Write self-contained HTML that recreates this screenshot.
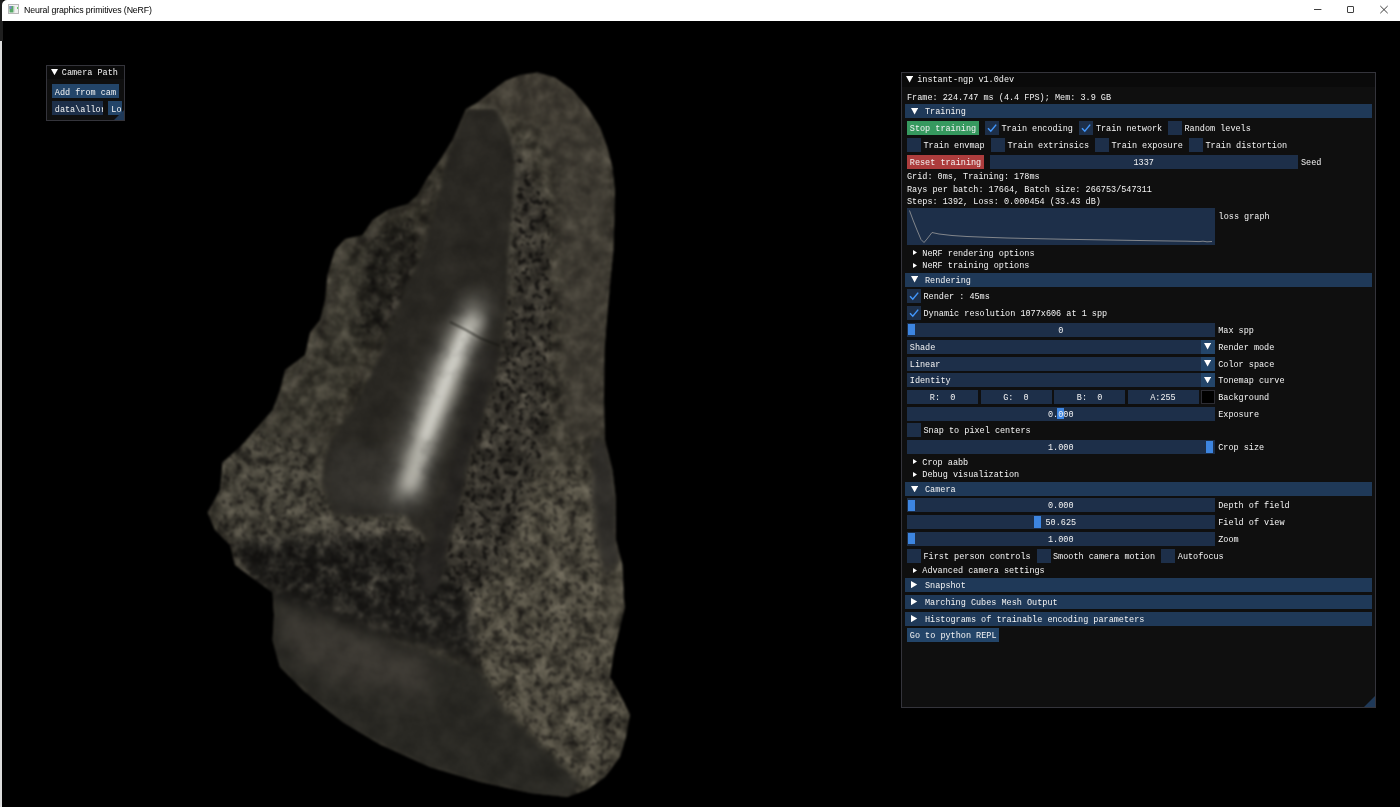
<!DOCTYPE html>
<html lang="en"><head><meta charset="utf-8"><title>Neural graphics primitives (NeRF)</title>
<style>
*{margin:0;padding:0;box-sizing:border-box}
html,body{width:1400px;height:807px;overflow:hidden;background:#000}
body{position:relative;font-family:"Liberation Mono","DejaVu Sans Mono",monospace;font-size:8.5px;color:#fff;line-height:10px}
.a{position:absolute}
.t{position:absolute;white-space:pre;height:10px;line-height:10px;color:#f4f4f4}
.fb{position:absolute;background:#1d2f49}
.hd{position:absolute;background:#1f3958}
.bt{position:absolute;background:#234569}
.gr{position:absolute;background:#3d85e0}
#titlebar{position:absolute;left:0;top:0;width:1400px;height:21px;background:#fff}
#title{position:absolute;left:24px;top:4px;font-family:"Liberation Sans",sans-serif;font-size:8.8px;letter-spacing:-0.14px;line-height:13px;color:#000;white-space:pre}
.win{position:absolute;background:#0f0f0f;border:1px solid #34343b}
.wt{position:absolute;left:0;top:0;right:0;background:#0a0a0a}
</style></head>
<body>
<svg class="a" style="left:0;top:21px" width="1400" height="786" viewBox="0 21 1400 786">
<defs>
<clipPath id="sil"><path d="M537.5 72.5L555 77.5L572.5 90L587.5 107.5L600 127.5L607.5 147.5L612.5 167.5L615 190L614.5 215L613.5 250L610.5 280L607.5 312.5L604.5 350L604 400L605 440L612.5 470L616 500L616 540L622.5 565L624 600L625 607L620 627L614 652L610 677L620 694.5L630 714.5L626 737L620 757L605 777L587.5 789.5L567.5 797L530 793L480 782L430 767L380 744.5L342.5 722L305 692L280 667L272.5 640L274 615L272.5 592.5L255 580L235 565L230 545L215 530L207.5 512.5L220 490L222.5 462.5L240 447L255 430L272.5 410L280 390L285 370L305 355L310 332.5L320 320L325 300L327.5 275L335 250L345 239L362.5 235L372.5 220L387.5 210L407.5 204L417.5 195L427.5 177.5L440 160L452.5 140L460 122.5L466 109L477.5 102.5L490 92.5L505 81L520 75Z"/></clipPath>
<filter id="b1" x="-5%" y="-5%" width="110%" height="110%" color-interpolation-filters="sRGB"><feGaussianBlur stdDeviation="1.0"/></filter>
<filter id="b2" x="-20%" y="-20%" width="140%" height="140%" color-interpolation-filters="sRGB"><feGaussianBlur stdDeviation="2"/></filter>
<filter id="b3" x="-20%" y="-20%" width="140%" height="140%" color-interpolation-filters="sRGB"><feGaussianBlur stdDeviation="3"/></filter>
<filter id="b6" x="-30%" y="-30%" width="160%" height="160%" color-interpolation-filters="sRGB"><feGaussianBlur stdDeviation="6"/></filter>
<filter id="b10" x="-40%" y="-40%" width="180%" height="180%" color-interpolation-filters="sRGB"><feGaussianBlur stdDeviation="10"/></filter>
<filter id="tex" x="0" y="0" width="100%" height="100%" color-interpolation-filters="sRGB">
<feTurbulence type="fractalNoise" baseFrequency="0.12" numOctaves="3" seed="7" result="n"/>
<feColorMatrix in="n" values="0 0 0 0 0.04  0 0 0 0 0.035  0 0 0 0 0.03  -0.9 0 0 0 0.45" result="d"/>
<feColorMatrix in="n" values="0 0 0 0 0.86  0 0 0 0 0.82  0 0 0 0 0.72  0.4 0 0 0 -0.2" result="l"/>
<feTurbulence type="fractalNoise" baseFrequency="0.06" numOctaves="3" seed="19" result="m"/>
<feColorMatrix in="m" values="0 0 0 0 0.04  0 0 0 0 0.035  0 0 0 0 0.03  -1.7 0 0 0 0.85" result="md"/>
<feColorMatrix in="m" values="0 0 0 0 0.86  0 0 0 0 0.82  0 0 0 0 0.72  0.6 0 0 0 -0.3" result="ml"/>
<feComposite in="md" in2="SourceGraphic" operator="atop" result="s0"/>
<feComposite in="ml" in2="s0" operator="atop" result="s00"/>
<feComposite in="d" in2="s00" operator="atop" result="s1"/>
<feComposite in="l" in2="s1" operator="atop"/></filter>
<filter id="tex2" x="0" y="0" width="100%" height="100%" color-interpolation-filters="sRGB"><feTurbulence type="fractalNoise" baseFrequency="0.05" numOctaves="4" seed="21" result="n"/><feColorMatrix in="n" values="0 0 0 0 0  0 0 0 0 0  0 0 0 0 0  -0.4 0 0 0 0.2" result="d"/><feColorMatrix in="n" values="0 0 0 0 0.85  0 0 0 0 0.81  0 0 0 0 0.72  0.12 0 0 0 -0.06" result="l"/><feComposite in="d" in2="SourceGraphic" operator="atop" result="s1"/><feComposite in="l" in2="s1" operator="atop"/></filter>
<filter id="pits" x="0" y="0" width="100%" height="100%" color-interpolation-filters="sRGB"><feTurbulence type="fractalNoise" baseFrequency="0.17" numOctaves="2" seed="3" result="n"/><feColorMatrix in="n" values="0 0 0 0 0.05  0 0 0 0 0.045  0 0 0 0 0.04  7 0 0 0 -3.75" result="p"/><feComposite in="p" in2="SourceGraphic" operator="in"/></filter>
</defs>
<g filter="url(#b1)"><g clip-path="url(#sil)">
<g filter="url(#tex)">
<rect x="200" y="60" width="440" height="747" fill="#3b382f"/>
<g filter="url(#b6)">
<path d="M500 80L540 70L580 90L600 125L560 130L520 125L495 109L470 105Z" fill="#3d392f"/>
<path d="M508 130L546 200L550 300L546 440L535 470L505 560L470 600L440 585L462 490L480 425L500 350L507 312L510 215Z" fill="#38352e"/>
<path d="M505 560L535 470L600 470L620 560L625 620L612 680L628 715L610 770L570 790L540 745L505 710L480 670L470 600Z" fill="#514d41"/>
<path d="M335 250L362 235L388 210L380 260L370 320L345 380L320 440L330 440L322 482L335 515L405 515L430 545L400 560L320 540L260 560L215 530L222 462L255 430L280 390L305 355L325 300Z" fill="#47443a"/>
<path d="M368 242L412 215L418 262L392 325L362 345L360 300Z" fill="#292722"/>
<path d="M232 542L300 536L410 536L440 560L470 600L480 660L370 630L275 598L245 575Z" fill="#1e1d1a"/>
<path d="M322 519L422 519L428 536L330 536Z" fill="#5a564b"/>
</g>
</g>
<g filter="url(#b6)">
<path d="M505 78L540 68L582 88L603 125L614 200L612 300L604 440L565 440L560 300L556 200L545 135L495 108L470 104Z" fill="#423e35" opacity="0.5"/>
</g>
<path d="M335 250L345 239L362 235L388 210L418 195L440 160L455 130L440 190L419 260L392 325L355 405L330 440L250 440L280 390L305 355L325 300Z" fill="#0c0b09" opacity="0.18" filter="url(#b6)"/>
<!-- pits on rough bands -->
<g filter="url(#pits)" opacity="0.75">
<path d="M508 140L548 200L552 300L548 440L535 470L505 560L470 600L440 585L462 490L480 425L500 350L507 312L510 230Z"/>
</g>
<g filter="url(#pits)" opacity="0.45">
<path d="M505 560L535 470L590 470L600 560L610 640L612 680L628 715L610 770L570 790L540 745L505 710L480 670L470 600Z"/>
<path d="M215 530L222 462L255 430L300 440L322 482L335 515L405 515L430 545L440 585L470 600L420 610L300 590L250 580Z"/>
<path d="M368 242L412 215L418 262L392 325L362 345L360 300Z"/>
</g>
<path d="M470 107L495 108L506 125L513 147.5L516 172.5L514 200L511 230L509 260L508 300" stroke="#6a6659" stroke-width="2.5" fill="none" filter="url(#b2)" opacity="0.9"/>
<!-- smooth faces -->
<g filter="url(#tex2)">
<g filter="url(#b2)">
<path d="M466 109L495 109L505 125L512.5 147.5L515 172.5L513 200L510 230L508 260L507 312L500 350L490 387L480 425L470 450L462 490L450 535L430 545L405 515L335 515L322 482L330 440L355 405L375 365L392 325L405 287L419 260L425 240L432 215L440 190L445 165L452 142L460 122Z" fill="#292722"/>
</g>
<g filter="url(#b3)">
<path d="M272 592L370 632L480 670L505 712L542 747L580 782L567 800L530 796L430 770L340 725L270 660Z" fill="#292823"/>
<path d="M592 440L606 440L613 470L617 500L617 540L620 560L606 575L598 545L592 500Z" fill="#2f2d29"/>
<path d="M462 490L450 535L440 585L425 600L415 560L430 545Z" fill="#252320"/>
<path d="M500 350L490 387L480 425L470 450L462 490L450 535L432 540L445 490L458 440L472 390L484 350Z" fill="#252320"/>
</g>
<g filter="url(#b6)"><path d="M335 445L398 445L403 512L337 512L325 482Z" fill="#33312c"/></g>
<g filter="url(#b10)"><path d="M280 605L370 638L440 662L420 700L330 680L284 650Z" fill="#3b3832"/></g>
<path d="M272 594L300 602L370 630L440 644L480 668" stroke="#1b1a18" stroke-width="6" fill="none" filter="url(#b3)" opacity="0.8"/>
<!-- highlight -->
<g filter="url(#b10)">
<path d="M488 300L480 330L466 365L450 410L434 450L418 505L390 505L402 450L414 410L432 365L452 325L468 298Z" fill="#9a9890" opacity="0.75"/>
</g>
<g filter="url(#b6)">
<path d="M484 318L476 335L462 368L446 410L430 450L416 490L400 490L412 450L424 410L440 368L458 328L470 314Z" fill="#d6d4cb" opacity="0.7"/>
</g>
<g filter="url(#b3)"><path d="M470 330L458 365L440 410L428 440L420 438L432 405L448 362L462 328Z" fill="#ecebe4" opacity="0.45"/></g>
</g>
<path d="M450 322L466 330L480 338L500 346" stroke="#14130f" stroke-width="1.1" fill="none"/>
</g></g>
</svg>
<div id="ui" style="position:absolute;left:0;top:0;width:1400px;height:807px;will-change:transform">
<div class="a" style="left:0;top:0;width:3px;height:41px;background:#1f1f1f"></div>
<div class="a" style="left:0;top:41px;width:2px;height:766px;background:#dcdddd"></div>
<div id="titlebar" style="left:2px;border-top-left-radius:5px"></div>
<svg class="a" style="left:8px;top:4px" width="11" height="10" viewBox="0 0 11 10"><rect x="0.5" y="0.5" width="10" height="9" fill="#f2f2f2" stroke="#b8b8b8"/><rect x="1.5" y="2" width="4" height="6.5" fill="#58a868"/><rect x="1.5" y="2" width="2" height="3" fill="#7a86c8"/><rect x="6" y="2" width="1" height="6.5" fill="#ddd"/><rect x="9" y="3" width="1" height="2" fill="#6c6"/></svg>
<div id="title">Neural graphics primitives (NeRF)</div>
<svg class="a" style="left:1300px;top:0" width="100" height="21" viewBox="0 0 100 21"><g stroke="#2a2a2a" stroke-width="0.9" fill="none"><path d="M14 9.5h7.4"/><rect x="47.5" y="6.5" width="6" height="6" rx="0.4"/><path d="M80.3 6l7.4 7.2M87.7 6l-7.4 7.2"/></g></svg>
<div class="win" style="left:46px;top:65px;width:79px;height:56px"><div class="wt" style="height:13px"></div></div>
<svg class="a" style="left:51.0px;top:68.9px" width="7.0" height="6.2" viewBox="0 0 7.0 6.2"><path d="M0 0H7.0L3.5 6.2Z" fill="#fff"/></svg>
<div class="t" style="left:61.8px;top:68.0px">Camera Path</div>
<div class="bt" style="left:52px;top:84.2px;width:67.0px;height:13.8px"></div>
<div class="t" style="left:54.8px;top:88.0px">Add from cam</div>
<div class="fb" style="left:52px;top:101px;width:51.0px;height:14.0px"></div>
<div class="t" style="left:54.8px;top:105px;width:48px;overflow:hidden">data\allor</div>
<div class="bt" style="left:108.4px;top:101px;width:13.6px;height:14.0px"></div>
<div class="t" style="left:111.3px;top:105.0px">Lo</div>
<svg class="a" style="left:114px;top:110px" width="10" height="10" viewBox="0 0 10 10"><path d="M10 0V10H0Z" fill="#1f3958"/></svg>
<div class="win" style="left:901px;top:72px;width:475px;height:636px"><div class="wt" style="height:14px"></div></div>
<svg class="a" style="left:1364px;top:696px" width="11" height="11" viewBox="0 0 11 11"><path d="M11 0V11H0Z" fill="#1f3958"/></svg>
<svg class="a" style="left:906.0px;top:76.2px" width="7.2" height="6.4" viewBox="0 0 7.2 6.4"><path d="M0 0H7.2L3.6 6.4Z" fill="#fff"/></svg>
<div class="t" style="left:917.2px;top:75.3px">instant-ngp v1.0dev</div>
<div class="t" style="left:907px;top:93.0px">Frame: 224.747 ms (4.4 FPS); Mem: 3.9 GB</div>
<div class="hd" style="left:905px;top:104.3px;width:467.0px;height:14.0px"></div>
<svg class="a" style="left:911.0px;top:108.2px" width="7.2" height="6.4" viewBox="0 0 7.2 6.4"><path d="M0 0H7.2L3.6 6.4Z" fill="#fff"/></svg>
<div class="t" style="left:925px;top:107.3px">Training</div>
<div class="a" style="left:907px;top:121px;width:72.0px;height:14.0px;background:#36995f"></div>
<div class="t" style="left:909.8px;top:124.0px">Stop training</div>
<div class="fb" style="left:985px;top:121px;width:14.0px;height:14.0px"></div>
<svg class="a" style="left:985px;top:121.0px" width="14" height="14" viewBox="0 0 14 14"><path d="M3 7.2L5.8 10.2L11.2 3.6" stroke="#4296fa" stroke-width="1.5" fill="none"/></svg>
<div class="t" style="left:1001.5px;top:124.0px">Train encoding</div>
<div class="fb" style="left:1079.4px;top:121px;width:14.0px;height:14.0px"></div>
<svg class="a" style="left:1079.4px;top:121.0px" width="14" height="14" viewBox="0 0 14 14"><path d="M3 7.2L5.8 10.2L11.2 3.6" stroke="#4296fa" stroke-width="1.5" fill="none"/></svg>
<div class="t" style="left:1095.9px;top:124.0px">Train network</div>
<div class="fb" style="left:1168px;top:121px;width:14.0px;height:14.0px"></div>
<div class="t" style="left:1184.5px;top:124.0px">Random levels</div>
<div class="fb" style="left:907px;top:137.7px;width:14.0px;height:14.0px"></div>
<div class="t" style="left:923.5px;top:140.7px">Train envmap</div>
<div class="fb" style="left:991px;top:137.7px;width:14.0px;height:14.0px"></div>
<div class="t" style="left:1007.5px;top:140.7px">Train extrinsics</div>
<div class="fb" style="left:1095px;top:137.7px;width:14.0px;height:14.0px"></div>
<div class="t" style="left:1111.5px;top:140.7px">Train exposure</div>
<div class="fb" style="left:1189px;top:137.7px;width:14.0px;height:14.0px"></div>
<div class="t" style="left:1205.5px;top:140.7px">Train distortion</div>
<div class="a" style="left:907px;top:154.5px;width:77.0px;height:14.0px;background:#ad3d3d"></div>
<div class="t" style="left:909.8px;top:157.5px">Reset training</div>
<div class="fb" style="left:990px;top:154.5px;width:307.5px;height:14.0px"></div>
<div class="t" style="left:1133.5px;top:157.5px">1337</div>
<div class="t" style="left:1301px;top:157.5px">Seed</div>
<div class="t" style="left:907px;top:172.2px">Grid: 0ms, Training: 178ms</div>
<div class="t" style="left:907px;top:184.7px">Rays per batch: 17664, Batch size: 266753/547311</div>
<div class="t" style="left:907px;top:197.2px">Steps: 1392, Loss: 0.000454 (33.43 dB)</div>
<div class="fb" style="left:907px;top:208px;width:307.6px;height:36.5px"></div>
<svg class="a" style="left:907px;top:208px" width="308" height="37" viewBox="0 0 308 37"><path d="M2.5 2.5L6 12L10 22L14 31.5L17 34.5L20 31L25 24.5L32 26L45 27.5L60 28.5L80 29.3L100 30L130 30.7L160 31.3L190 31.8L220 32.3L250 32.8L280 33.2L292 33.6L296 33.2L300 33.8L305 33.5" stroke="#9c9c9c" stroke-width="0.8" fill="none"/></svg>
<div class="t" style="left:1218.6000000000001px;top:211.8px">loss graph</div>
<svg class="a" style="left:912.8px;top:250.2px" width="4.2" height="5.0" viewBox="0 0 4.2 5.0"><path d="M0 0V5.0L4.2 2.5Z" fill="#fff"/></svg>
<div class="t" style="left:922.3px;top:248.7px">NeRF rendering options</div>
<svg class="a" style="left:912.8px;top:262.7px" width="4.2" height="5.0" viewBox="0 0 4.2 5.0"><path d="M0 0V5.0L4.2 2.5Z" fill="#fff"/></svg>
<div class="t" style="left:922.3px;top:261.2px">NeRF training options</div>
<div class="hd" style="left:905px;top:272.5px;width:467.0px;height:14.0px"></div>
<svg class="a" style="left:911.0px;top:276.4px" width="7.2" height="6.4" viewBox="0 0 7.2 6.4"><path d="M0 0H7.2L3.6 6.4Z" fill="#fff"/></svg>
<div class="t" style="left:925px;top:275.5px">Rendering</div>
<div class="fb" style="left:907px;top:289.3px;width:14.0px;height:14.0px"></div>
<svg class="a" style="left:907px;top:289.3px" width="14" height="14" viewBox="0 0 14 14"><path d="M3 7.2L5.8 10.2L11.2 3.6" stroke="#4296fa" stroke-width="1.5" fill="none"/></svg>
<div class="t" style="left:923.5px;top:292.3px">Render : 45ms</div>
<div class="fb" style="left:907px;top:306px;width:14.0px;height:14.0px"></div>
<svg class="a" style="left:907px;top:306.0px" width="14" height="14" viewBox="0 0 14 14"><path d="M3 7.2L5.8 10.2L11.2 3.6" stroke="#4296fa" stroke-width="1.5" fill="none"/></svg>
<div class="t" style="left:923.5px;top:309.0px">Dynamic resolution 1077x606 at 1 spp</div>
<div class="fb" style="left:907px;top:322.8px;width:307.6px;height:14.0px"></div>
<div class="gr" style="left:908px;top:324.2px;width:7.2px;height:11.2px"></div>
<div class="t" style="left:1058.2px;top:325.8px">0</div>
<div class="t" style="left:1218.2px;top:325.8px">Max spp</div>
<div class="fb" style="left:907px;top:339.5px;width:307.6px;height:14.0px"></div>
<div class="bt" style="left:1201px;top:339.5px;width:13.6px;height:14.0px"></div>
<svg class="a" style="left:1204.2px;top:343.3px" width="7.2" height="6.4" viewBox="0 0 7.2 6.4"><path d="M0 0H7.2L3.6 6.4Z" fill="#fff"/></svg>
<div class="t" style="left:909.8px;top:342.5px">Shade</div>
<div class="t" style="left:1218.2px;top:342.5px">Render mode</div>
<div class="fb" style="left:907px;top:356.6px;width:307.6px;height:14.0px"></div>
<div class="bt" style="left:1201px;top:356.6px;width:13.6px;height:14.0px"></div>
<svg class="a" style="left:1204.2px;top:360.4px" width="7.2" height="6.4" viewBox="0 0 7.2 6.4"><path d="M0 0H7.2L3.6 6.4Z" fill="#fff"/></svg>
<div class="t" style="left:909.8px;top:359.6px">Linear</div>
<div class="t" style="left:1218.2px;top:359.6px">Color space</div>
<div class="fb" style="left:907px;top:373px;width:307.6px;height:14.0px"></div>
<div class="bt" style="left:1201px;top:373px;width:13.6px;height:14.0px"></div>
<svg class="a" style="left:1204.2px;top:376.8px" width="7.2" height="6.4" viewBox="0 0 7.2 6.4"><path d="M0 0H7.2L3.6 6.4Z" fill="#fff"/></svg>
<div class="t" style="left:909.8px;top:376.0px">Identity</div>
<div class="t" style="left:1218.2px;top:376.0px">Tonemap curve</div>
<div class="fb" style="left:907px;top:389.8px;width:71.0px;height:14.0px"></div>
<div class="t" style="left:929.8px;top:392.8px">R:  0</div>
<div class="fb" style="left:980.5px;top:389.8px;width:71.0px;height:14.0px"></div>
<div class="t" style="left:1003.2px;top:392.8px">G:  0</div>
<div class="fb" style="left:1054px;top:389.8px;width:71.0px;height:14.0px"></div>
<div class="t" style="left:1076.8px;top:392.8px">B:  0</div>
<div class="fb" style="left:1127.5px;top:389.8px;width:71.0px;height:14.0px"></div>
<div class="t" style="left:1150.2px;top:392.8px">A:255</div>
<div class="a" style="left:1201px;top:389.8px;width:13.6px;height:14.0px;background:#000;border:1px solid #2c2c33"></div>
<div class="t" style="left:1218.2px;top:392.8px">Background</div>
<div class="fb" style="left:907px;top:406.5px;width:307.6px;height:14.0px"></div>
<div class="gr" style="left:1057.3px;top:407.9px;width:7.2px;height:11.2px"></div>
<div class="t" style="left:1048px;top:409.5px">0.000</div>
<div class="t" style="left:1218.2px;top:409.5px">Exposure</div>
<div class="fb" style="left:907px;top:423.2px;width:14.0px;height:14.0px"></div>
<div class="t" style="left:923.5px;top:426.2px">Snap to pixel centers</div>
<div class="fb" style="left:907px;top:440px;width:307.6px;height:14.0px"></div>
<div class="gr" style="left:1206.3px;top:441.4px;width:7.2px;height:11.2px"></div>
<div class="t" style="left:1048.0px;top:443.0px">1.000</div>
<div class="t" style="left:1218.2px;top:443.0px">Crop size</div>
<svg class="a" style="left:912.8px;top:459.2px" width="4.2" height="5.0" viewBox="0 0 4.2 5.0"><path d="M0 0V5.0L4.2 2.5Z" fill="#fff"/></svg>
<div class="t" style="left:922.3px;top:457.7px">Crop aabb</div>
<svg class="a" style="left:912.8px;top:471.7px" width="4.2" height="5.0" viewBox="0 0 4.2 5.0"><path d="M0 0V5.0L4.2 2.5Z" fill="#fff"/></svg>
<div class="t" style="left:922.3px;top:470.2px">Debug visualization</div>
<div class="hd" style="left:905px;top:481.7px;width:467.0px;height:14.0px"></div>
<svg class="a" style="left:911.0px;top:485.6px" width="7.2" height="6.4" viewBox="0 0 7.2 6.4"><path d="M0 0H7.2L3.6 6.4Z" fill="#fff"/></svg>
<div class="t" style="left:925px;top:484.7px">Camera</div>
<div class="fb" style="left:907px;top:498.3px;width:307.6px;height:14.0px"></div>
<div class="gr" style="left:908px;top:499.7px;width:7.2px;height:11.2px"></div>
<div class="t" style="left:1048.0px;top:501.3px">0.000</div>
<div class="t" style="left:1218.2px;top:501.3px">Depth of field</div>
<div class="fb" style="left:907px;top:515px;width:307.6px;height:14.0px"></div>
<div class="gr" style="left:1034.3px;top:516.4px;width:7.2px;height:11.2px"></div>
<div class="t" style="left:1045.5px;top:518.0px">50.625</div>
<div class="t" style="left:1218.2px;top:518.0px">Field of view</div>
<div class="fb" style="left:907px;top:531.7px;width:307.6px;height:14.0px"></div>
<div class="gr" style="left:908px;top:533.1px;width:7.2px;height:11.2px"></div>
<div class="t" style="left:1048.0px;top:534.7px">1.000</div>
<div class="t" style="left:1218.2px;top:534.7px">Zoom</div>
<div class="fb" style="left:907px;top:548.8px;width:14.0px;height:14.0px"></div>
<div class="t" style="left:923.5px;top:551.8px">First person controls</div>
<div class="fb" style="left:1036.5px;top:548.8px;width:14.0px;height:14.0px"></div>
<div class="t" style="left:1053.0px;top:551.8px">Smooth camera motion</div>
<div class="fb" style="left:1161.3px;top:548.8px;width:14.0px;height:14.0px"></div>
<div class="t" style="left:1177.8px;top:551.8px">Autofocus</div>
<svg class="a" style="left:912.8px;top:567.7px" width="4.2" height="5.0" viewBox="0 0 4.2 5.0"><path d="M0 0V5.0L4.2 2.5Z" fill="#fff"/></svg>
<div class="t" style="left:922.3px;top:566.2px">Advanced camera settings</div>
<div class="hd" style="left:905px;top:577.7px;width:467.0px;height:14.0px"></div>
<svg class="a" style="left:911.4px;top:581.1px" width="6.2" height="7.2" viewBox="0 0 6.2 7.2"><path d="M0 0V7.2L6.2 3.6Z" fill="#fff"/></svg>
<div class="t" style="left:925px;top:580.7px">Snapshot</div>
<div class="hd" style="left:905px;top:594.7px;width:467.0px;height:14.0px"></div>
<svg class="a" style="left:911.4px;top:598.1px" width="6.2" height="7.2" viewBox="0 0 6.2 7.2"><path d="M0 0V7.2L6.2 3.6Z" fill="#fff"/></svg>
<div class="t" style="left:925px;top:597.7px">Marching Cubes Mesh Output</div>
<div class="hd" style="left:905px;top:611.5px;width:467.0px;height:14.0px"></div>
<svg class="a" style="left:911.4px;top:614.9px" width="6.2" height="7.2" viewBox="0 0 6.2 7.2"><path d="M0 0V7.2L6.2 3.6Z" fill="#fff"/></svg>
<div class="t" style="left:925px;top:614.5px">Histograms of trainable encoding parameters</div>
<div class="bt" style="left:907px;top:628.3px;width:92.3px;height:14.0px"></div>
<div class="t" style="left:909.8px;top:631.3px">Go to python REPL</div>
</div>
</body></html>
